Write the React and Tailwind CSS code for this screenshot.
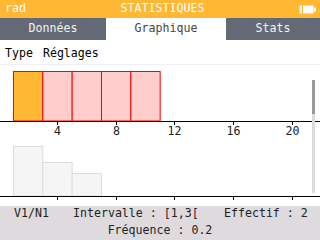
import React from 'react';

const mono = { fontFamily: '"DejaVu Sans Mono", "Liberation Mono", monospace' };

const x = (v) => -1.7 + v * 14.67;

const Battery = () => (
  <svg width="17" height="9" viewBox="0 0 17 9" className="mr-[4px]">
    <rect x="0.5" y="0.5" width="14" height="8" fill="white" />
    <rect x="3" y="0" width="1" height="9" fill="#FFB734" />
    <rect x="15" y="2.5" width="2" height="4" fill="white" />
  </svg>
);

const Chart = () => {
  const top = [1, 3, 5, 7, 9];
  const ticks = [4, 8, 12, 16, 20];
  const low = [
    { a: 1, b: 3, y: 81 },
    { a: 3, b: 5, y: 97 },
    { a: 5, b: 7, y: 108 },
  ];
  return (
    <svg width="320" height="141" viewBox="0 0 320 141" className="block">
      {top.map((a, i) => (
        <rect
          key={a}
          x={x(a) + 0.5}
          y={6.5}
          width={x(a + 2) - x(a)}
          height={49.5}
          fill={i === 0 ? '#FFB734' : '#FFCCCC'}
          stroke="#FF0000"
          strokeWidth="1"
        />
      ))}
      <line x1="0" y1="56.5" x2="320" y2="56.5" stroke="black" strokeWidth="1" />
      {ticks.map((t) => (
        <g key={t}>
          <line x1={Math.round(x(t)) + 0.5} y1="56" x2={Math.round(x(t)) + 0.5} y2="60" stroke="black" />
          <text
            x={Math.round(x(t)) + 0.5}
            y="70"
            textAnchor="middle"
            fontSize="11.6"
            fill="#222"
            style={mono}
          >
            {t}
          </text>
        </g>
      ))}
      {low.map((b) => (
        <rect
          key={b.a}
          x={x(b.a) + 0.5}
          y={b.y + 0.5}
          width={x(b.b) - x(b.a)}
          height={131 - b.y - 0.5}
          fill="#F5F5F5"
          stroke="#DCDCDC"
        />
      ))}
      <line x1="0" y1="131.5" x2="320" y2="131.5" stroke="black" strokeWidth="1" />
      {ticks.map((t) => (
        <line key={t} x1={Math.round(x(t)) + 0.5} y1="131" x2={Math.round(x(t)) + 0.5} y2="135" stroke="black" />
      ))}
      <rect x="312" y="15" width="3" height="113" fill="#DDD9DD" />
      <rect x="312" y="15" width="3" height="34" fill="#9A9A9A" />
    </svg>
  );
};

export default function App() {
  return (
    <div className="w-[320px] h-[240px] overflow-hidden bg-white flex flex-col text-[11.6px] leading-none" style={mono}>
      <div className="h-[18px] bg-[#FFB734] text-white grid grid-cols-[1fr_auto_1fr] items-center pl-[5px]">
        <span>rad</span>
        <span>STATISTIQUES</span>
        <div className="flex justify-end">
          <Battery />
        </div>
      </div>
      <div className="h-[22px] flex">
        <div className="w-[106px] bg-[#646A75] text-[#f4f4f4] flex items-center justify-center">Données</div>
        <div className="w-[120px] bg-white text-[#444] flex items-center justify-center">Graphique</div>
        <div className="flex-1 bg-[#646A75] text-[#f4f4f4] flex items-center justify-center">Stats</div>
      </div>
      <div className="h-[25px] flex items-center gap-[10px] pl-[5px] text-black border-b border-[#F0F0F0] pt-[3px]">
        <span>Type</span>
        <span>Réglages</span>
      </div>
      <Chart />
      <div className="flex-1 bg-[#DEDADE] text-[#222] flex flex-col justify-center gap-[5px] pb-[1px]">
        <div className="flex pl-[14px]">
          <span className="w-[59px]">V1/N1</span>
          <span className="w-[151px]">Intervalle : [1,3[</span>
          <span>Effectif : 2</span>
        </div>
        <div className="text-center">Fréquence : 0.2</div>
      </div>
    </div>
  );
}
